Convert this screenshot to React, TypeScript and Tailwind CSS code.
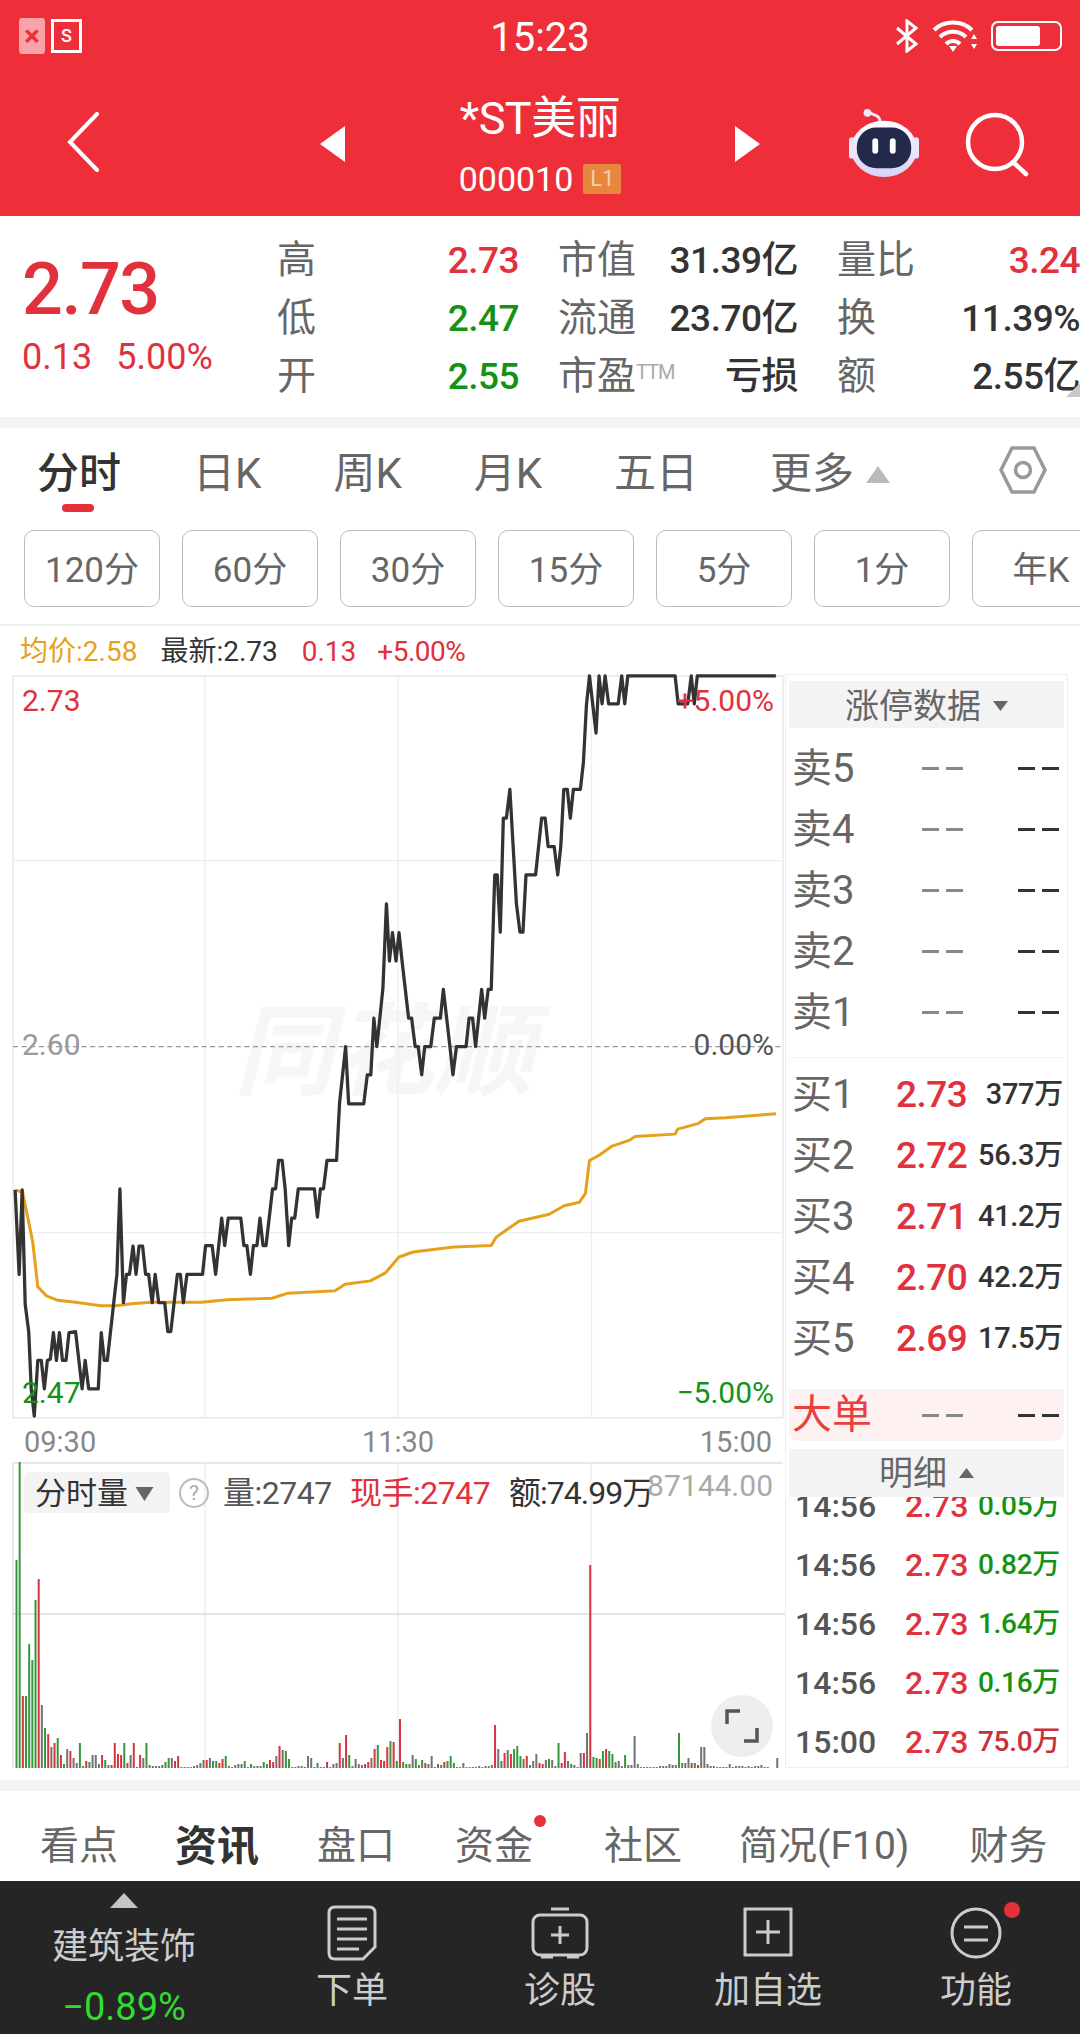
const pricePts = "30,1045 38,1215 44,1045 50,1275 57,1330 62,1445 68,1500 75,1388 82,1388 88,1445 94,1388 100,1385 106,1332 112,1388 118,1332 124,1388 131,1388 137,1332 150,1330 163,1445 169,1388 176,1445 195,1445 201,1332 207,1388 213,1388 232,1215 238,1043 245,1272 251,1215 257,1215 264,1158 270,1215 276,1158 283,1158 289,1215 295,1215 302,1272 308,1215 315,1272 327,1272 333,1330 339,1330 352,1215 358,1215 364,1272 371,1215 402,1215 408,1157 421,1157 428,1215 440,1102 446,1157 453,1102 478,1102 484,1157 490,1157 497,1215 503,1157 510,1157 516,1102 522,1157 528,1157 541,1043 547,1043 553,986 560,986 566,1043 573,1157 579,1102 585,1102 592,1043 624,1043 630,1100 636,1043 642,1043 649,986 668,986 674,870 686,757 692,872 722,872 729,814 736,814 742,700 748,757 760,640 767,470 773,585 779,528 786,585 792,528 798,585 811,700 817,700 824,757 830,757 837,814 843,757 855,757 862,700 874,700 880,642 893,757 899,814 906,757 925,757 931,700 938,700 944,757 956,642 962,700 969,642 975,642 982,412 987,412 993,527 999,298 1005,298 1012,240 1025,470 1032,527 1038,527 1044,412 1063,412 1075,298 1082,298 1088,355 1100,355 1107,412 1113,355 1119,240 1126,240 1132,298 1138,240 1152,240 1158,185 1164,70 1170,12 1183,127 1189,12 1195,68 1201,12 1208,68 1227,68 1234,12 1240,68 1246,12 1340,12 1346,68 1365,68 1372,12 1378,68 1384,12 1540,12";
const avgPts = "30,1045 45,1050 55,1100 65,1150 75,1240 92,1258 115,1267 150,1271 200,1278 230,1278 260,1274 300,1271 400,1271 450,1266 540,1263 570,1253 630,1250 665,1248 685,1235 735,1228 765,1212 792,1180 820,1170 900,1160 975,1157 985,1140 1030,1108 1090,1094 1120,1077 1150,1070 1162,1052 1170,986 1190,975 1215,957 1250,945 1260,938 1340,933 1345,923 1385,912 1400,902 1440,900 1540,892";

// heights with colour letter, three stretches traced from the picture
const volA = "208g 306g 72r 72g 124g 108g 168g 189r 63n 40g 34r 21n 25r 30g 13r 4g 19n 17r 10n 5n 25g 2n 7r 6g 13n 13n 4n 13r 8g 3n 3r 25r 14r 13r 25g 5r 13n 25r 1n 13r 10n 25g 3g 2n 2n 2n 3n 6g 10g 10n 7r 12r 1n 1n 1n 1n 2n 3n 5n 8n 8r 10n 7g 7g 5r 9r 12g 2n 1n 3n 4n 4n 7g 1n 4g 2n 2n 2n 6g 4g";
const volB = "8r 6r 12n 22r 18n 17g 9g 1n 1n 2n 2n 1n 12n 10n 1n 5g 1n 1n 6r 1n 4n 5n 25r 10n 33r 13g 2n 9n 4n 3n 4r 6r 10n 19r 23g 8r 7r 21r 27g 26r 7g 49r 6g 4g 4g 13n 9g 3n 8g 5r 4n 12n 1n 4n 3n 6r 7g 12g 5g 1n 1n 5n 1n 1n 1n 1n 2n 1n 2n 2n 3n 43r 19n 7g 15r 18n 14r 19g 22g 12g 9n 12r";
const volC = "3n 7n 14n 5r 4r 8n 9g 8n 2n 25g 5r 16r 7n 4g 3n 1n 15n 15r 35n 203r 11g 10g 9r 17g 19r 17g 14g 6n 7n 2n 13g 3n 3n 32n 4n 1n 1n 1n 1n 1n 1n 2n 2n 2n 4n 3n 3n 35g 5n 5n 10n 5r 5g 3r 21n 21n 4n 2n 2n 1n 1n 1n 1n 4n 1n 2n 2n 2n 1n 2n 1n 2n 2n 3n 1n 1n 0n 0n 10n";

const volColor: Record<string, string> = { r: "#d8333f", g: "#36973a", n: "#727272" };

function Bars({ data, start }: { data: string; start: number }) {
  return (
    <>
      {data.split(" ").map((b, i) => {
        const h = parseInt(b);
        return (
          <rect
            key={i}
            x={start + i * 3.17}
            y={306 - h}
            width={2}
            height={h}
            fill={volColor[b[b.length - 1]]}
          />
        );
      })}
    </>
  );
}

const ask = ["卖5", "卖4", "卖3", "卖2", "卖1"];
const bid = [
  ["买1", "2.73", "377万"],
  ["买2", "2.72", "56.3万"],
  ["买3", "2.71", "41.2万"],
  ["买4", "2.70", "42.2万"],
  ["买5", "2.69", "17.5万"],
];
const ticks = [
  ["14:56", "0.05万", "text-[#149214]"],
  ["14:56", "0.82万", "text-[#149214]"],
  ["14:56", "1.64万", "text-[#149214]"],
  ["14:56", "0.16万", "text-[#149214]"],
  ["15:00", "75.0万", "text-[#c9303c]"],
];
const frames = ["120分", "60分", "30分", "15分", "5分", "1分", "年K"];

function Dashes({ className }: { className: string }) {
  return (
    <span className={`flex gap-[7px] ${className}`}>
      <span className="h-[3px] w-[17px] bg-current" />
      <span className="h-[3px] w-[17px] bg-current" />
    </span>
  );
}

function Stat({ label, value, color, width, tag }: { label: string; value: string; color: string; width: string; tag?: boolean }) {
  return (
    <div className={`flex items-center justify-between ${width}`}>
      <span className="text-[#666] text-[39px] flex">
        {label}
        {tag && <span className="text-[#aaa] text-[20px] leading-[38px] tracking-[-1px]">TTM</span>}
      </span>
      <span className={`font-medium text-[37px] tracking-[-0.5px] ${color}`}>{value}</span>
    </div>
  );
}

export default function App() {
  return (
    <div className="w-[1080px] h-[2034px] overflow-hidden bg-white flex flex-col font-[Roboto,'Noto_Sans_CJK_SC',sans-serif]">
      {/* header */}
      <div className="h-[216px] shrink-0 bg-[#ee2f3a] text-white">
        <div className="h-[72px] flex items-center relative">
          <div className="ml-[19px] w-[26px] h-[36px] rounded-[3px] bg-[#f8a3a8] flex items-center justify-center text-[#ee2f3a] text-[30px] font-bold leading-none">×</div>
          <div className="ml-[6px] w-[31px] h-[34px] border-[3px] border-white flex items-center justify-center text-[18px] leading-none font-medium">S</div>
          <div className="absolute left-0 right-0 top-[18px] text-center text-[40px] leading-none">15:23</div>
          <svg className="ml-auto" width="24" height="34" viewBox="0 0 24 34" fill="none" stroke="white" strokeWidth="3">
            <path d="M2 9 L21 25 L12 32 V2 L21 9 L2 25" />
          </svg>
          <svg className="ml-[13px]" width="46" height="34" viewBox="0 0 46 34" fill="none" stroke="white" strokeWidth="4">
            <path d="M2 11 C12 1 30 1 40 11" />
            <path d="M8 18 C15 11 27 11 34 18" />
            <path d="M14 25 C18 21 24 21 28 25" />
            <path d="M17 27 L21 33 L25 27 Z" fill="white" stroke="none" />
            <path d="M39 20 L42 15 L45 20 Z M39 25 L42 30 L45 25 Z" fill="white" stroke="none" />
          </svg>
          <div className="ml-[13px] mr-[18px] w-[71px] h-[30px] rounded-[7px] border-[2px] border-white p-[3px] flex">
            <div className="w-[44px] h-full rounded-[3px] bg-white" />
          </div>
        </div>
        <div className="flex items-start h-[144px]">
          <svg className="ml-[66px] mt-[40px]" width="34" height="60" viewBox="0 0 34 60" fill="none" stroke="white" strokeWidth="4" strokeLinecap="round">
            <path d="M31 2 L4 30 L31 58" />
          </svg>
          <svg className="ml-[220px] mt-[54px]" width="25" height="36" viewBox="0 0 25 36" fill="white">
            <path d="M25 0 V36 L0 18 Z" />
          </svg>
          <div className="w-[390px] flex flex-col items-center">
            <div className="mt-[21px] text-[45px] leading-[52px] tracking-[-0.5px]">*ST美丽</div>
            <div className="mt-[14px] flex items-center">
              <span className="text-[34px] leading-[40px]">000010</span>
              <span className="ml-[10px] w-[38px] h-[30px] rounded-[2px] bg-[#e6873f] text-[#f8cfa8] text-[22px] leading-[30px] text-center">L1</span>
            </div>
          </div>
          <svg className="mt-[54px]" width="25" height="36" viewBox="0 0 25 36" fill="white">
            <path d="M0 0 V36 L25 18 Z" />
          </svg>
          <svg className="ml-[87px] mt-[36px]" width="74" height="70" viewBox="0 0 74 72">
            <defs>
              <linearGradient id="helmet" x1="0" y1="0" x2="0" y2="1">
                <stop offset="0" stopColor="#ffffff" />
                <stop offset="1" stopColor="#d5d2f5" />
              </linearGradient>
            </defs>
            <path d="M33 14 C33 6 24 8 22 4" fill="none" stroke="#eeeaff" strokeWidth="3" />
            <circle cx="20" cy="5" r="4" fill="#eeeaff" />
            <ellipse cx="37" cy="42" rx="34" ry="29" fill="url(#helmet)" />
            <rect x="1" y="30" width="6" height="22" rx="3" fill="#e8e6fb" />
            <rect x="67" y="30" width="6" height="22" rx="3" fill="#e8e6fb" />
            <rect x="9" y="20" width="56" height="42" rx="20" fill="#22294a" />
            <rect x="25" y="31" width="6" height="16" rx="3" fill="white" />
            <rect x="43" y="31" width="6" height="16" rx="3" fill="white" />
          </svg>
          <svg className="ml-[44px] mt-[40px]" width="66" height="66" viewBox="0 0 66 66" fill="none" stroke="white" strokeWidth="4.5" strokeLinecap="round">
            <circle cx="30" cy="30" r="27" />
            <path d="M48 50 L61 62" />
          </svg>
        </div>
      </div>

      {/* quote block */}
      <div className="h-[201px] shrink-0 flex relative">
        <div className="w-[277px] pl-[22px]">
          <div className="mt-[35px] text-[#e0313c] text-[72px] leading-[78px] font-medium tracking-[-1.5px]">2.73</div>
          <div className="mt-[8px] flex gap-[24px] text-[#e0313c] text-[36px] leading-[40px]">
            <span>0.13</span>
            <span>5.00%</span>
          </div>
        </div>
        <div className="flex flex-col gap-[11px] pt-[21px]">
          <div className="flex gap-[39px] leading-[47px] h-[47px]">
            <Stat label="高" value="2.73" color="text-[#e0313c]" width="w-[242px]" />
            <Stat label="市值" value="31.39亿" color="text-[#333]" width="w-[240px]" />
            <Stat label="量比" value="3.24" color="text-[#e0313c]" width="w-[243px]" />
          </div>
          <div className="flex gap-[39px] leading-[47px] h-[47px]">
            <Stat label="低" value="2.47" color="text-[#149214]" width="w-[242px]" />
            <Stat label="流通" value="23.70亿" color="text-[#333]" width="w-[240px]" />
            <Stat label="换" value="11.39%" color="text-[#333]" width="w-[243px]" />
          </div>
          <div className="flex gap-[39px] leading-[47px] h-[47px]">
            <Stat label="开" value="2.55" color="text-[#149214]" width="w-[242px]" />
            <Stat label="市盈" value="亏损" color="text-[#333]" width="w-[240px]" tag />
            <Stat label="额" value="2.55亿" color="text-[#333]" width="w-[243px]" />
          </div>
        </div>
        <svg className="absolute right-0 bottom-[10px]" width="24" height="24" viewBox="0 0 24 24" fill="#c8c8c8">
          <path d="M24 0 V14 H10 Z" />
        </svg>
      </div>
      <div className="h-[11px] shrink-0 bg-[#f5f3f3]" />

      {/* period tabs */}
      <div className="h-[91px] shrink-0 flex items-start pl-[37px] gap-[72px] relative text-[42px] text-[#666] leading-[48px] pt-[22px]">
        <span className="relative text-[#333] font-medium">
          分时
          <span className="absolute left-[25px] top-[54px] w-[32px] h-[8px] rounded-full bg-[#e6303a]" />
        </span>
        <span>日K</span>
        <span>周K</span>
        <span>月K</span>
        <span>五日</span>
        <span className="flex items-center">
          更多
          <svg className="ml-[12px]" width="24" height="17" viewBox="0 0 24 17" fill="#bbb">
            <path d="M12 0 L24 17 H0 Z" />
          </svg>
        </span>
        <svg className="absolute left-[999px] top-[17px]" width="48" height="50" viewBox="0 0 48 50" fill="none" stroke="#999" strokeWidth="3.5">
          <path d="M13 3 H35 L46 25 L35 47 H13 L2 25 Z" />
          <circle cx="24" cy="25" r="7.5" />
        </svg>
      </div>

      {/* period buttons */}
      <div className="h-[107px] shrink-0 flex gap-[22px] pl-[24px] pt-[11px] overflow-hidden border-b-[2px] border-[#eee]">
        {frames.map((f) => (
          <div key={f} className="w-[136px] h-[77px] shrink-0 rounded-[10px] border-[1.5px] border-[#bbb] flex items-center justify-center pt-[5px] text-[#666] text-[35px]">
            {f === "年K" ? <span className="ml-[2px]">{f}</span> : f}
          </div>
        ))}
      </div>

      {/* legend */}
      <div className="h-[44px] shrink-0 flex items-end pl-[20px] text-[28px] leading-[36px]">
        <span className="text-[#e6a11c]">均价:2.58</span>
        <span className="ml-[23px] text-[#333]">最新:2.73</span>
        <span className="ml-[24px] text-[#e0313c]">0.13</span>
        <span className="ml-[21px] text-[#e0313c] tracking-[-0.5px]">+5.00%</span>
      </div>

      {/* charts + order book */}
      <div className="h-[1098px] shrink-0 flex">
        <div className="w-[785px] shrink-0 relative">
          <div className="relative h-[748px]">
            <div className="absolute left-[234px] top-[323px] text-[#f6f6f6] text-[100px] leading-[120px] font-bold italic">同花顺</div>
            <svg className="absolute left-0 top-0" width="790" height="780" viewBox="0 0 1568 1568" preserveAspectRatio="none" fill="none">
              <path d="M26 12 H1554 V1503 H26 Z" stroke="#e8e8e8" strokeWidth="3" />
              <path d="M407 12 V1503 M790 12 V1503 M1174 12 V1503 M26 383 H1554 M26 1131 H1554" stroke="#eeeeee" strokeWidth="2.5" />
              <path d="M26 757 H1554" stroke="#999" strokeWidth="2.5" strokeDasharray="10 7" />
              <polyline points={avgPts} stroke="#e6a11c" strokeWidth="6" strokeLinejoin="round" />
              <polyline points={pricePts} stroke="#333" strokeWidth="6.5" strokeLinejoin="round" />
            </svg>
            <span className="absolute left-[22px] top-[13px] text-[30px] leading-[36px] text-[#e0313c]">2.73</span>
            <span className="absolute right-[11px] top-[13px] text-[30px] leading-[36px] text-[#e0313c]">+5.00%</span>
            <span className="absolute left-[22px] top-[357px] text-[30px] leading-[36px] text-[#999]">2.60</span>
            <span className="absolute right-[11px] top-[357px] text-[30px] leading-[36px] text-[#555]">0.00%</span>
            <span className="absolute left-[22px] top-[705px] text-[30px] leading-[36px] text-[#149214]">2.47</span>
            <span className="absolute right-[11px] top-[705px] text-[30px] leading-[36px] text-[#149214]">−5.00%</span>
          </div>
          <div className="h-[44px] flex items-center justify-between pl-[24px] pr-[13px] pt-[6px] text-[#888] text-[29px]">
            <span>09:30</span>
            <span>11:30</span>
            <span>15:00</span>
          </div>
          <div className="relative h-[306px]">
            <svg className="absolute left-0 top-0" width="785" height="306" viewBox="0 0 785 306" fill="none">
              <path d="M13 306 V1 H783" stroke="#e8e8e8" strokeWidth="2" />
              <path d="M205 0 V306 M398 0 V306 M591 0 V306" stroke="#eeeeee" strokeWidth="1.5" />
              <path d="M13 152 H785" stroke="#dddddd" strokeWidth="1.5" />
              <Bars data={volA} start={15.5} />
              <Bars data={volB} start={269} />
              <Bars data={volC} start={529} />
            </svg>
            <div className="absolute left-[24px] top-[10px] w-[146px] h-[41px] rounded-[5px] bg-[#f3f3f3] flex items-center pl-[11px] pt-[3px] text-[#333] text-[31px]">
              分时量
              <svg className="ml-[7px]" width="19" height="14" viewBox="0 0 18 14" fill="#666">
                <path d="M0 0 H18 L9 14 Z" />
              </svg>
            </div>
            <div className="absolute left-[179px] top-[16px] w-[30px] h-[30px] rounded-full border-[2px] border-[#bbb] flex items-center justify-center text-[#aaa] text-[21px] leading-none">?</div>
            <span className="absolute left-[223px] top-[10px] text-[#555] text-[32px] leading-[42px] tracking-[-0.5px]">量:2747</span>
            <span className="absolute left-[350px] top-[10px] text-[#e0313c] text-[32px] leading-[42px] tracking-[-0.5px]">现手:2747</span>
            <span className="absolute left-[509px] top-[10px] text-[#333] text-[32px] leading-[42px] tracking-[-1px]">额:74.99万</span>
            <span className="absolute right-[12px] top-[6px] text-[#aaa] text-[30px] leading-[36px]">87144.00</span>
            <div className="absolute left-[711px] top-[233px] w-[62px] h-[62px] rounded-full bg-[#eeeeee] flex items-center justify-center">
              <svg width="34" height="34" viewBox="0 0 34 34" fill="none" stroke="#555" strokeWidth="3.5">
                <path d="M2 15 V2 H15 M32 19 V32 H19" />
              </svg>
            </div>
          </div>
        </div>

        {/* order book panel */}
        <div className="mt-[4px] w-[283px] h-[1094px] shrink-0 border-[1.5px] border-[#eee] px-[3px] flex flex-col overflow-hidden">
          <div className="mt-[6px] h-[47px] shrink-0 bg-[#f3f3f3] flex items-center justify-center pt-[3px] text-[#666] text-[34px]">
            涨停数据
            <svg className="ml-[12px]" width="15" height="10" viewBox="0 0 15 10" fill="#666">
              <path d="M0 0 H15 L7.5 10 Z" />
            </svg>
          </div>
          <div className="pt-[10px] pb-[14px] border-b-[1px] border-[#f3f3f3]">
            {ask.map((a) => (
              <div key={a} className="h-[61px] flex items-center px-[3px] text-[#666] text-[40px]">
                <span className="w-[130px]">{a}</span>
                <Dashes className="text-[#888]" />
                <Dashes className="ml-[55px] text-[#333]" />
              </div>
            ))}
          </div>
          <div className="pt-[6px]">
            {bid.map((b) => (
              <div key={b[0]} className="h-[61px] flex items-center pl-[3px] pr-[1px] text-[40px]">
                <span className="w-[104px] text-[#666]">{b[0]}</span>
                <span className="font-medium text-[37px] tracking-[-0.5px] text-[#e0313c]">{b[1]}</span>
                <span className="ml-auto font-medium text-[#333] text-[29px] tracking-[-0.3px]">{b[2]}</span>
              </div>
            ))}
          </div>
          <div className="mt-[20px] h-[52px] shrink-0 rounded-b-[10px] bg-[#fdf1f1] flex items-center px-[3px] text-[40px] text-[#e8403c]">
            <span className="w-[130px]">大单</span>
            <Dashes className="text-[#888]" />
            <Dashes className="ml-[55px] text-[#333]" />
          </div>
          <div className="mt-[8px] h-[48px] shrink-0 bg-[#f3f3f3] flex items-center justify-center text-[#666] text-[34px]">
            明细
            <svg className="ml-[12px]" width="15" height="10" viewBox="0 0 15 10" fill="#666">
              <path d="M7.5 0 L15 10 H0 Z" />
            </svg>
          </div>
          <div className="flex-1 overflow-hidden">
            <div className="-mt-[21px]">
              {ticks.map((t, i) => (
                <div key={i} className="h-[59px] flex items-center pl-[6px] pr-[4px] text-[32px] font-medium">
                  <span className="w-[110px] text-[#555]">{t[0]}</span>
                  <span className="text-[#e0313c]">2.73</span>
                  <span className={`ml-auto text-[28px] tracking-[-0.3px] ${t[2]}`}>{t[1]}</span>
                </div>
              ))}
            </div>
          </div>
        </div>
      </div>

      <div className="h-[12px] shrink-0" />
      <div className="h-[11px] shrink-0 bg-[#f5f3f3]" />

      {/* news tabs */}
      <div className="h-[90px] shrink-0 flex items-center pt-[20px] pl-[40px] text-[#666] text-[39px]">
        <span>看点</span>
        <span className="ml-[57px] text-[42px] font-bold text-[#333]">资讯</span>
        <span className="ml-[58px]">盘口</span>
        <span className="ml-[60px] relative">
          资金
          <span className="absolute -right-[13px] top-[-2px] w-[12px] h-[12px] rounded-full bg-[#e6303a]" />
        </span>
        <span className="ml-[71px]">社区</span>
        <span className="ml-[57px]">简况(F10)</span>
        <span className="ml-[60px]">财务</span>
      </div>

      {/* bottom bar */}
      <div className="h-[153px] shrink-0 bg-[#252525] grid grid-cols-[248px_repeat(4,208px)] text-[#ccc]">
        <div className="flex flex-col items-center pt-[12px]">
          <svg width="28" height="15" viewBox="0 0 28 15" fill="#c4c4c4">
            <path d="M14 0 L28 15 H0 Z" />
          </svg>
          <span className="mt-[17px] text-[36px] leading-[44px]">建筑装饰</span>
          <span className="mt-[16px] text-[38px] leading-[44px] text-[#2fdc2f]">−0.89%</span>
        </div>
        <div className="flex flex-col items-center pt-[24px]">
          <svg width="50" height="56" viewBox="0 0 50 56" fill="none" stroke="#ccc" strokeWidth="3">
            <path d="M8 2 H42 Q48 2 48 8 V42 L36 54 H8 Q2 54 2 48 V8 Q2 2 8 2 Z" />
            <path d="M10 14 H40 M10 24 H40 M10 34 H40 M10 44 H32" />
          </svg>
          <span className="mt-[8px] text-[36px] leading-[44px]">下单</span>
        </div>
        <div className="flex flex-col items-center pt-[26px]">
          <svg width="58" height="54" viewBox="0 0 58 54" fill="none" stroke="#ccc" strokeWidth="3">
            <path d="M20 2 H38" />
            <rect x="2" y="8" width="54" height="40" rx="7" />
            <path d="M29 19 V37 M20 28 H38 M10 50 H22 M36 50 H48" />
          </svg>
          <span className="mt-[8px] text-[36px] leading-[44px]">诊股</span>
        </div>
        <div className="flex flex-col items-center pt-[26px]">
          <svg width="50" height="50" viewBox="0 0 50 50" fill="none" stroke="#ccc" strokeWidth="3">
            <rect x="2" y="2" width="46" height="46" />
            <path d="M25 13 V37 M13 25 H37" />
          </svg>
          <span className="mt-[12px] text-[36px] leading-[44px]">加自选</span>
        </div>
        <div className="flex flex-col items-center pt-[26px] relative">
          <svg width="52" height="52" viewBox="0 0 52 52" fill="none" stroke="#ccc" strokeWidth="3">
            <circle cx="26" cy="26" r="24" />
            <path d="M14 20 H38 M14 33 H38" />
          </svg>
          <span className="mt-[10px] text-[36px] leading-[44px]">功能</span>
          <span className="absolute left-[132px] top-[21px] w-[16px] h-[16px] rounded-full bg-[#e6303a]" />
        </div>
      </div>
    </div>
  );
}
